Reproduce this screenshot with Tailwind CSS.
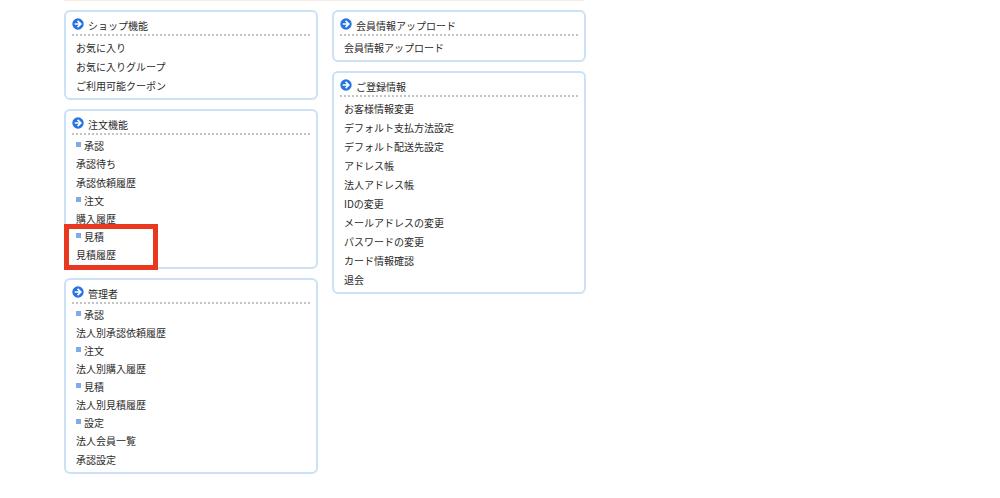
<!DOCTYPE html>
<html lang="ja">
<head>
<meta charset="utf-8">
<title>マイページ</title>
<script src="https://cdn.jsdelivr.net/npm/@tailwindcss/browser@4"></script>
</head>
<body class="bg-white font-['Noto_Sans_CJK_JP',sans-serif] text-[10px] text-[#2b2b2b]">
<svg class="hidden" aria-hidden="true">
  <symbol id="arrow" viewBox="0 0 12 12">
    <circle cx="6" cy="6" r="5.7" fill="#2673e2"/>
    <path d="M2.7 6H8.4M5.6 2.8L8.8 6L5.6 9.2" fill="none" stroke="#fff" stroke-width="1.7"/>
  </symbol>
</svg>
<main class="ml-16 mr-4 max-w-[522px]">
  <div class="mr-[2px] h-px bg-[#fdeae5]"></div>
  <div class="mt-[9px] grid grid-cols-2 items-start gap-x-[14px]">
    <div class="flex flex-col gap-[9px]">
      <section class="rounded-md border-2 border-[#cbe1f6] px-[6px] pb-[3px]">
        <h2 class="flex h-6 items-center gap-1 border-b-2 border-dotted border-[#c4c4c4]"><svg class="mt-[2px] size-3"><use href="#arrow"/></svg><span class="pt-1">ショップ機能</span></h2>
        <ul class="pl-1 pt-[2px] leading-[19px]">
          <li><a href="#">お気に入り</a></li>
          <li><a href="#">お気に入りグループ</a></li>
          <li><a href="#">ご利用可能クーポン</a></li>
        </ul>
      </section>
      <section class="rounded-md border-2 border-[#cbe1f6] px-[6px] pb-[3px]">
        <h2 class="flex h-6 items-center gap-1 border-b-2 border-dotted border-[#c4c4c4]"><svg class="mt-[2px] size-3"><use href="#arrow"/></svg><span class="pt-1">注文機能</span></h2>
        <div class="pl-1 pt-[2px] leading-[19px]">
          <h3 class="flex h-[17px] items-center gap-[3px]"><span class="mb-[2px] size-[5px] bg-[#7fabeb]"></span>承認</h3>
          <ul>
            <li><a href="#">承認待ち</a></li>
            <li><a href="#">承認依頼履歴</a></li>
          </ul>
          <h3 class="flex h-[17px] items-center gap-[3px]"><span class="mb-[2px] size-[5px] bg-[#7fabeb]"></span>注文</h3>
          <ul>
            <li><a href="#">購入履歴</a></li>
          </ul>
          <div class="relative">
            <h3 class="flex h-[17px] items-center gap-[3px]"><span class="mb-[2px] size-[5px] bg-[#7fabeb]"></span>見積</h3>
            <ul>
              <li><a href="#">見積履歴</a></li>
            </ul>
            <div class="pointer-events-none absolute -bottom-[6px] -left-3 -top-1 w-[94px] border-5 border-[#e93820]"></div>
          </div>
        </div>
      </section>
      <section class="rounded-md border-2 border-[#cbe1f6] px-[6px] pb-[3px]">
        <h2 class="flex h-6 items-center gap-1 border-b-2 border-dotted border-[#c4c4c4]"><svg class="mt-[2px] size-3"><use href="#arrow"/></svg><span class="pt-1">管理者</span></h2>
        <div class="pl-1 pt-[2px] leading-[19px]">
          <h3 class="flex h-[17px] items-center gap-[3px]"><span class="mb-[2px] size-[5px] bg-[#7fabeb]"></span>承認</h3>
          <ul>
            <li><a href="#">法人別承認依頼履歴</a></li>
          </ul>
          <h3 class="flex h-[17px] items-center gap-[3px]"><span class="mb-[2px] size-[5px] bg-[#7fabeb]"></span>注文</h3>
          <ul>
            <li><a href="#">法人別購入履歴</a></li>
          </ul>
          <h3 class="flex h-[17px] items-center gap-[3px]"><span class="mb-[2px] size-[5px] bg-[#7fabeb]"></span>見積</h3>
          <ul>
            <li><a href="#">法人別見積履歴</a></li>
          </ul>
          <h3 class="flex h-[17px] items-center gap-[3px]"><span class="mb-[2px] size-[5px] bg-[#7fabeb]"></span>設定</h3>
          <ul>
            <li><a href="#">法人会員一覧</a></li>
            <li><a href="#">承認設定</a></li>
          </ul>
        </div>
      </section>
    </div>
    <div class="flex flex-col gap-[9px]">
      <section class="rounded-md border-2 border-[#cbe1f6] px-[6px] pb-[3px]">
        <h2 class="flex h-6 items-center gap-1 border-b-2 border-dotted border-[#c4c4c4]"><svg class="mt-[2px] size-3"><use href="#arrow"/></svg><span class="pt-1">会員情報アップロード</span></h2>
        <ul class="pl-1 pt-[2px] leading-[19px]">
          <li><a href="#">会員情報アップロード</a></li>
        </ul>
      </section>
      <section class="rounded-md border-2 border-[#cbe1f6] px-[6px] pb-[3px]">
        <h2 class="flex h-6 items-center gap-1 border-b-2 border-dotted border-[#c4c4c4]"><svg class="mt-[2px] size-3"><use href="#arrow"/></svg><span class="pt-1">ご登録情報</span></h2>
        <ul class="pl-1 pt-[2px] leading-[19px]">
          <li><a href="#">お客様情報変更</a></li>
          <li><a href="#">デフォルト支払方法設定</a></li>
          <li><a href="#">デフォルト配送先設定</a></li>
          <li><a href="#">アドレス帳</a></li>
          <li><a href="#">法人アドレス帳</a></li>
          <li><a href="#">IDの変更</a></li>
          <li><a href="#">メールアドレスの変更</a></li>
          <li><a href="#">パスワードの変更</a></li>
          <li><a href="#">カード情報確認</a></li>
          <li><a href="#">退会</a></li>
        </ul>
      </section>
    </div>
  </div>
</main>
</body>
</html>
